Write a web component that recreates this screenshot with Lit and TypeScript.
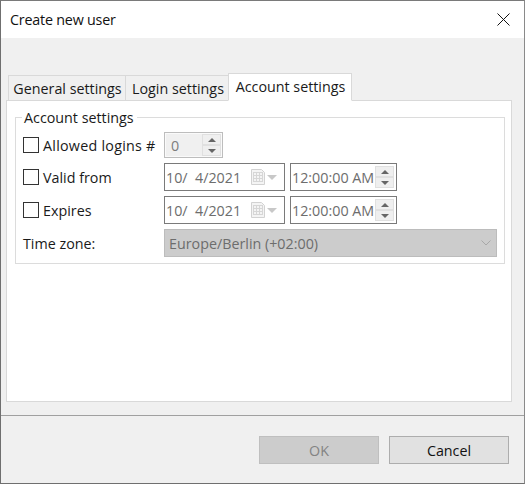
import { LitElement, html, css, svg } from "lit";
import { customElement } from "lit/decorators.js";

const calendar = svg`<svg class="cal" width="14" height="16" viewBox="0 0 14 16"><path d="M.5.500h10l3 3v12H.5z" fill="#f4f4f4" stroke="#d2d2d2"/><path d="M2 3.500h9M2 6.500h9M2 9.500h9M2 12.500h9M2.500 3v10M5.500 3v10M8.500 3v10M11.500 3v10" stroke="#d6d6d6" fill="none"/></svg>`;

@customElement("app-root")
export class AppRoot extends LitElement {
  static styles = css`
    :host { display: block; width: 525px; height: 484px; font-family: "Open Sans", "Noto Sans", sans-serif; font-size: 14.3px; color: #1a1a1a; }
    * { box-sizing: border-box; }
    .win { width: 525px; height: 484px; border: 1px solid #6f6f6f; border-top-color: #7a7a7a; border-right-color: #8a8a8a; background: #f0f0f0; display: flex; flex-direction: column; }
    .title { height: 37px; background: #fff; display: flex; align-items: center; justify-content: space-between; padding: 0 14px 0 9px; flex: none; }
    .title span { color: #111; letter-spacing: -0.2px; }
    .body { flex: 1; padding: 35px 12px 13px 5px; display: flex; flex-direction: column; }
    .tabs { display: flex; align-items: flex-end; height: 28px; padding-left: 2px; margin-bottom: -1px; position: relative; z-index: 1; flex: none; }
    .tab { height: 26px; border: 1px solid #d9d9d9; background: #f0f0f0; display: flex; align-items: center; justify-content: center; margin-right: -1px; padding-left: 1px; }
    .tab.g { width: 118px; }
    .tab.l { width: 104px; padding-left: 2px; }
    .tab.a { width: 124px; height: 28px; background: #fff; border-bottom-color: #fff; padding-bottom: 1px; }
    .panel { flex: 1; background: #fff; border: 1px solid #d9d9d9; padding: 16px 6px 0 8px; }
    .group { position: relative; border: 1px solid #dcdcdc; height: 147px; padding: 12px 7px 0 7px; display: grid; grid-template-columns: 141px 121px 5px 107px; grid-auto-rows: 28px; row-gap: 5px; }
    .legend { position: absolute; left: 6px; top: -10px; background: #fff; padding: 0 3px 0 2px; line-height: 20px; }
    .lab { display: flex; align-items: center; gap: 4px; }
    .lab.first { padding-top: 2px; }
    .lab.first span { letter-spacing: 0.25px; }
    .box { width: 16px; height: 16px; border: 1px solid #333; background: #fff; flex: none; }
    .spin-cell { grid-column: 2 / 5; padding-top: 2px; }
    .spin { width: 59px; height: 26px; border: 1px solid #bdbdbd; background: #f0f0f0; box-shadow: inset 0 0 0 1px #fafafa; display: flex; align-items: center; justify-content: space-between; color: #7d7d7d; padding: 0 1px 0 6px; }
    .arrows { display: flex; flex-direction: column; width: 19px; }
    .arrows b { height: 11px; background: #efefef; border: 1px solid #e0e0e0; display: flex; align-items: center; justify-content: center; }
    .up { width: 0; height: 0; border: 4px solid transparent; border-top: 0; border-bottom: 4px solid #666; }
    .dn { width: 0; height: 0; border: 4px solid transparent; border-bottom: 0; border-top: 4px solid #666; }
    .field { border: 1px solid #7a7a7a; background: #fff; color: #6d6d6d; display: flex; align-items: center; justify-content: space-between; height: 28px; padding: 0 2px 0 1px; white-space: pre; }
    .date .right { display: flex; align-items: center; gap: 2px; padding-right: 5px; }
    .cal { display: block; }
    .caret { width: 0; height: 0; border: 5px solid transparent; border-bottom: 0; border-top: 5px solid #c8c8c8; }
    .gap { width: 5px; }
    .combo { grid-column: 2 / 5; width: 333px; height: 28px; background: #cccccc; border: 1px solid #bcbcbc; display: flex; align-items: center; justify-content: space-between; color: #6d6d6d; padding: 0 5px 0 4px; }
    .foot { height: 68px; border-top: 1px solid #a0a0a0; display: flex; justify-content: flex-end; gap: 10px; padding: 20px 15px 0 0; flex: none; }
    .btn { width: 120px; height: 28px; border: 1px solid #adadad; background: #e1e1e1; display: flex; align-items: center; justify-content: center; color: #111; }
    .btn.off { background: #cccccc; border-color: #bfbfbf; color: #838383; }
  `;

  private arrows() {
    return html`<div class="arrows"><b><i class="up"></i></b><b><i class="dn"></i></b></div>`;
  }

  private dateRow(label: string) {
    return html`
      <div class="lab"><div class="box"></div><span>${label}</span></div>
      <div class="field date"><span>10/  4/2021</span><span class="right">${calendar}<i class="caret"></i></span></div>
      <div class="gap"></div>
      <div class="field"><span>12:00:00 AM</span>${this.arrows()}</div>`;
  }

  render() {
    return html`
      <div class="win">
        <div class="title">
          <span>Create new user</span>
          <svg width="13" height="13" viewBox="0 0 13 13"><path d="M.5.5l12 12M12.500.5l-12 12" stroke="#111" fill="none"/></svg>
        </div>
        <div class="body">
          <div class="tabs">
            <div class="tab g">General settings</div>
            <div class="tab l">Login settings</div>
            <div class="tab a">Account settings</div>
          </div>
          <div class="panel">
            <div class="group">
              <div class="legend">Account settings</div>
              <div class="lab first"><div class="box"></div><span>Allowed logins #</span></div>
              <div class="spin-cell"><div class="spin"><span>0</span>${this.arrows()}</div></div>
              ${this.dateRow("Valid from")}
              ${this.dateRow("Expires")}
              <div class="lab">Time zone:</div>
              <div class="combo"><span>Europe/Berlin (+02:00)</span>
                <svg width="10" height="6" viewBox="0 0 10 6"><path d="M.5.5l4.500 4.500 4.500-4.500" stroke="#a8a8a8" fill="none"/></svg>
              </div>
            </div>
          </div>
        </div>
        <div class="foot">
          <div class="btn off">OK</div>
          <div class="btn">Cancel</div>
        </div>
      </div>`;
  }
}
